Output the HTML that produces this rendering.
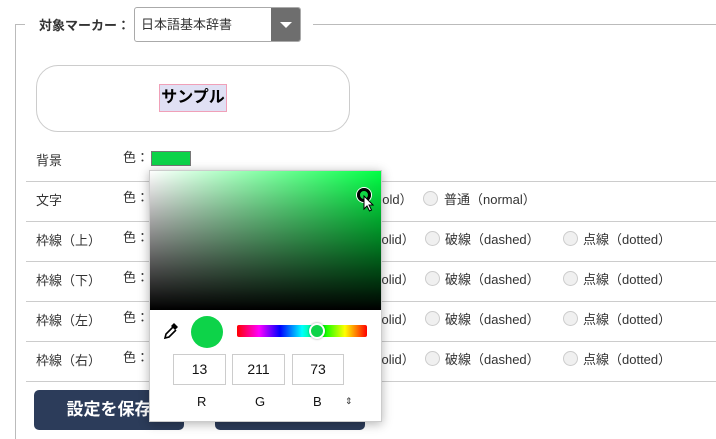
<!DOCTYPE html>
<html><head><meta charset="utf-8"><style>
*{margin:0;padding:0;box-sizing:border-box}
body{width:716px;height:439px;overflow:hidden;background:#fff;font-family:"Liberation Sans","Noto Sans CJK JP",sans-serif;font-size:13px;color:#333;position:relative}
.a{position:absolute;white-space:nowrap}
.hl{position:absolute;left:26px;right:0;height:1px;background:#ccc}
.rad{position:absolute;width:15px;height:15px;border-radius:50%;border:1px solid #ccc;background:#f0f0f0}
.btn{position:absolute;top:390px;width:150px;height:40px;background:#2c3c5a;border-radius:5px;color:#fff;font-weight:bold;font-size:17px;text-align:center;line-height:40px}
.inp{position:absolute;top:354px;height:31px;border:1px solid #ccc;text-align:center;line-height:29px;font-size:14px;color:#111}
</style></head><body>
<div class="a" style="left:15px;top:24px;width:1px;height:415px;background:#bbb"></div>
<div class="a" style="left:15px;top:24px;width:10px;height:1px;background:#bbb"></div>
<div class="a" style="left:313px;top:24px;right:0;height:1px;background:#bbb"></div>
<div class="a" style="left:39px;top:15px;font-weight:bold;font-size:13px">対象マーカー：</div>
<div class="a" style="left:134px;top:7px;width:167px;height:35px;border:1px solid #aaa;border-radius:3px;background:#fff"></div>
<div class="a" style="left:141px;top:14px;font-size:13px">日本語基本辞書</div>
<div class="a" style="left:271px;top:8px;width:29px;height:33px;background:#6e6e6e;border-radius:0 2px 2px 0"></div>
<div class="a" style="left:280px;top:22px;width:0;height:0;border-left:6px solid transparent;border-right:6px solid transparent;border-top:6px solid #fff"></div>
<div class="a" style="left:36px;top:65px;width:314px;height:67px;border:1px solid #ccc;border-radius:22px"></div>
<div class="a" style="left:159px;top:84px;width:68px;height:28px;border:1px solid #f0a0b8;background:#e0e0f4;font-weight:bold;font-size:16px;color:#000;text-align:center;line-height:25px">サンプル</div>

<div class="a" style="left:36px;top:150px">背景</div>
<div class="a" style="left:123px;top:147px">色：</div>
<div class="a" style="left:151px;top:151px;width:40px;height:15px;background:#0dd349;border:1px solid #777"></div>

<div class="hl" style="top:181px"></div>
<div class="hl" style="top:221px"></div>
<div class="hl" style="top:261px"></div>
<div class="hl" style="top:301px"></div>
<div class="hl" style="top:341px"></div>
<div class="hl" style="top:381px"></div>

<div class="a" style="left:36px;top:190px">文字</div>
<div class="a" style="left:36px;top:230px">枠線（上）</div>
<div class="a" style="left:36px;top:270px">枠線（下）</div>
<div class="a" style="left:36px;top:310px">枠線（左）</div>
<div class="a" style="left:36px;top:350px">枠線（右）</div>
<div class="a" style="left:123px;top:187px">色：</div>
<div class="a" style="left:123px;top:227px">色：</div>
<div class="a" style="left:123px;top:267px">色：</div>
<div class="a" style="left:123px;top:307px">色：</div>
<div class="a" style="left:123px;top:347px">色：</div>

<div class="a" style="left:375px;top:189px">bold）</div>
<div class="rad" style="left:423px;top:191px"></div>
<div class="a" style="left:444px;top:189px">普通（normal）</div>

<div class="a" style="left:375px;top:229px">solid）</div>
<div class="rad" style="left:425px;top:231px"></div>
<div class="a" style="left:445px;top:229px">破線（dashed）</div>
<div class="rad" style="left:563px;top:231px"></div>
<div class="a" style="left:583px;top:229px">点線（dotted）</div>

<div class="a" style="left:375px;top:269px">solid）</div>
<div class="rad" style="left:425px;top:271px"></div>
<div class="a" style="left:445px;top:269px">破線（dashed）</div>
<div class="rad" style="left:563px;top:271px"></div>
<div class="a" style="left:583px;top:269px">点線（dotted）</div>

<div class="a" style="left:375px;top:309px">solid）</div>
<div class="rad" style="left:425px;top:311px"></div>
<div class="a" style="left:445px;top:309px">破線（dashed）</div>
<div class="rad" style="left:563px;top:311px"></div>
<div class="a" style="left:583px;top:309px">点線（dotted）</div>

<div class="a" style="left:375px;top:349px">solid）</div>
<div class="rad" style="left:425px;top:351px"></div>
<div class="a" style="left:445px;top:349px">破線（dashed）</div>
<div class="rad" style="left:563px;top:351px"></div>
<div class="a" style="left:583px;top:349px">点線（dotted）</div>

<div class="btn" style="left:34px">設定を保存</div>
<div class="btn" style="left:215px"></div>

<!-- picker -->
<div class="a" style="left:149px;top:170px;width:233px;height:252px;background:#fff;border:1px solid #ccc;box-shadow:0 2px 10px rgba(0,0,0,.3)">
 <div class="a" style="left:0;top:0;width:231px;height:139px;background:linear-gradient(to bottom,rgba(0,0,0,0),#000),linear-gradient(to right,#fff,#00ff44)"></div>
 <div class="a" style="left:207px;top:17px;width:14px;height:14px;border-radius:50%;border:3px solid #000;box-shadow:0 0 0 1px #fff"></div>
 <svg class="a" style="left:213px;top:24px" width="12" height="18" viewBox="0 0 12 18"><path d="M1 1 L1 14 L4 11 L6.5 16 L8.5 15 L6 10 L10 10 Z" fill="#fff" stroke="#000" stroke-width="1"/></svg>
 <svg class="a" style="left:13px;top:151px" width="16" height="18" viewBox="0 0 16 18"><path d="M10 5 L3 12 L2 16 L6 15 L13 8" fill="none" stroke="#000" stroke-width="1.6"/><path d="M11 1 L15 5 L12 8 L8 4Z" fill="#000"/></svg>
 <div class="a" style="left:41px;top:145px;width:32px;height:32px;border-radius:50%;background:#0dd349"></div>
 <div class="a" style="left:87px;top:154px;width:130px;height:12px;border-radius:2px;background:linear-gradient(to right,#f00,#f0f 17%,#00f 33%,#0ff 50%,#0f0 67%,#ff0 83%,#f00)"></div>
 <div class="a" style="left:159px;top:152px;width:16px;height:16px;border-radius:50%;background:#0dd349;border:2px solid #fff;box-shadow:0 0 2px rgba(0,0,0,.4)"></div>
 <div class="inp" style="left:23px;top:183px;width:53px">13</div>
 <div class="inp" style="left:82px;top:183px;width:53px">211</div>
 <div class="inp" style="left:142px;top:183px;width:52px">73</div>
 <div class="a" style="left:47px;top:223px;font-size:13px;color:#111">R</div>
 <div class="a" style="left:105px;top:223px;font-size:13px;color:#111">G</div>
 <div class="a" style="left:163px;top:223px;font-size:13px;color:#111">B</div>
 <div class="a" style="left:195px;top:225px;font-size:9px;color:#333">⇕</div>
</div>
</body></html>
